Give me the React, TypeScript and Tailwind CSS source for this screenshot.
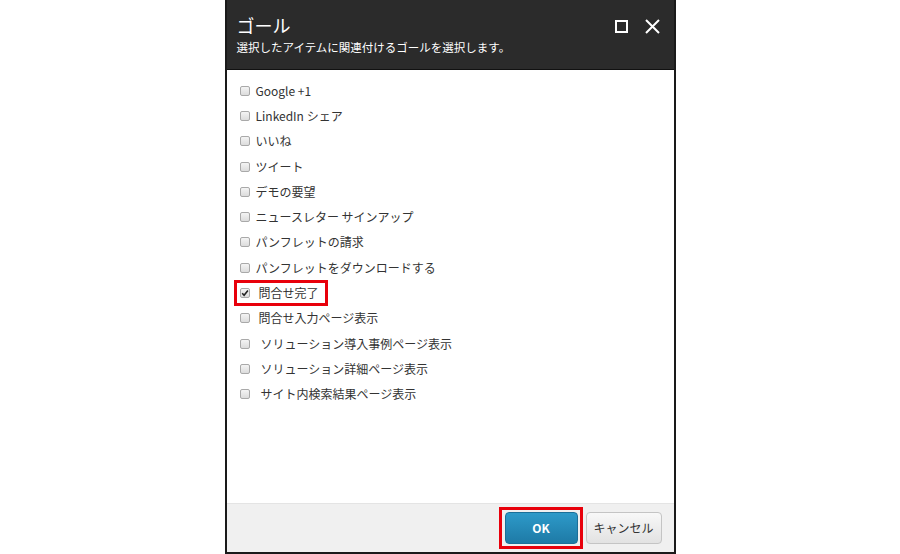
import React from "react";

const items: { label: string; checked?: boolean; pad?: number }[] = [
  { label: "Google +1" },
  { label: "LinkedIn シェア" },
  { label: "いいね" },
  { label: "ツイート" },
  { label: "デモの要望" },
  { label: "ニュースレター サインアップ" },
  { label: "パンフレットの請求" },
  { label: "パンフレットをダウンロードする" },
  { label: "問合せ完了", checked: true, pad: 1 },
  { label: "問合せ入力ページ表示", pad: 1 },
  { label: "ソリューション導入事例ページ表示", pad: 2 },
  { label: "ソリューション詳細ページ表示", pad: 2 },
  { label: "サイト内検索結果ページ表示", pad: 2 },
];

function Box({ checked }: { checked?: boolean }) {
  return (
    <span className="w-[10px] h-[10px] rounded-[2px] border border-[#a9a9a9] bg-gradient-to-b from-[#f4f4f4] to-[#dcdcdc] flex items-center justify-center shrink-0">
      {checked && (
        <svg width="8" height="8" viewBox="0 0 8 8">
          <path d="M1.2 4.2 L3.1 6.2 L6.9 1.5" stroke="#222" strokeWidth="1.6" fill="none" />
        </svg>
      )}
    </span>
  );
}

export default function App() {
  return (
    <div className="w-[900px] h-[554px] bg-white flex justify-center" style={{ fontFamily: '"Noto Sans CJK JP", "Noto Sans", sans-serif' }}>
      <div className="w-[451px] h-[554px] border-2 border-[#1a1a1a] border-t-0 flex flex-col">
        <div className="h-[70px] bg-[#2b2b2b] border-b border-[#111] flex justify-between pl-[10px] pr-[14px] shrink-0">
          <div className="flex flex-col pt-[14px]">
            <div className="text-[18px] leading-[22px] text-white">ゴール</div>
            <div className="text-[11.5px] leading-[16px] text-white mt-[3px]">選択したアイテムに関連付けるゴールを選択します。</div>
          </div>
          <div className="flex items-start gap-[17px] pt-[19px]">
            <span className="w-[13px] h-[13px] border-2 border-white mt-[1px]" />
            <svg width="15" height="15" viewBox="0 0 15 15">
              <path d="M1 1 L14 14 M14 1 L1 14" stroke="white" strokeWidth="2" />
            </svg>
          </div>
        </div>
        <div className="flex-1 bg-white pt-[8px] pl-[13px]">
          {items.map((it) => {
            const row = (
              <div className="flex items-center h-[25.3px] text-[12px] text-[#333]">
                <Box checked={it.checked} />
                <span className={it.pad === 2 ? "ml-[11px]" : it.pad === 1 ? "ml-[9px]" : "ml-[6px]"}>{it.label}</span>
              </div>
            );
            if (it.checked) {
              return (
                <div key={it.label} className="relative">
                  {row}
                  <div className="absolute left-[-6px] top-[0px] w-[94px] h-[26px] border-[3px] border-[#e8000b]" />
                </div>
              );
            }
            return <div key={it.label}>{row}</div>;
          })}
        </div>
        <div className="h-[49px] bg-[#f0f0f0] border-t border-[#e4e4e4] flex items-center justify-end pr-[12px] gap-[8px] shrink-0">
          <div className="relative">
            <button className="w-[73px] h-[32px] rounded-[4px] bg-gradient-to-b from-[#2d9ac9] to-[#1e7aa6] border border-[#1b6f98] text-white text-[12px] font-bold">
              OK
            </button>
            <div className="absolute left-[-6px] top-[-5px] w-[84px] h-[42px] border-[3px] border-[#e8000b]" />
          </div>
          <button className="w-[76px] h-[32px] rounded-[4px] bg-gradient-to-b from-[#f8f8f8] to-[#e2e2e2] border border-[#c4c4c4] text-[#333] text-[12px]">
            キャンセル
          </button>
        </div>
      </div>
    </div>
  );
}
